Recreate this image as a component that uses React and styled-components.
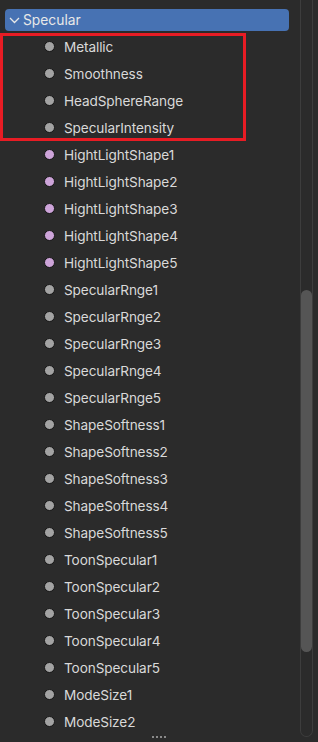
import React from 'react';
import styled, { createGlobalStyle } from 'styled-components';

const GlobalStyle = createGlobalStyle`
	html, body {
		margin: 0;
		padding: 0;
		background: #2b2b2b;
	}
	body {
		font-family: Inter, "Noto Sans", "DejaVu Sans", sans-serif;
	}
`;

const Page = styled.div`
	position: relative;
	width: 318px;
	height: 742px;
	overflow: hidden;
	background: #2b2b2b;
	padding-top: 9px;
	box-sizing: border-box;
`;

const Header = styled.div`
	margin-left: 5px;
	width: 284px;
	height: 22px;
	border-radius: 4px;
	background: #4772b3;
	display: flex;
	align-items: center;
	gap: 2px;
	padding-left: 3px;
	box-sizing: border-box;
	color: #e8e8e8;
	font-size: 13.8px;
`;

const Group = styled.div`
	margin-top: 2px;
	width: 246px;
	outline: 3px solid #e81c24;
	outline-offset: -3px;
`;

const Row = styled.div`
	height: 27px;
	display: flex;
	align-items: center;
	padding-left: 44px;
	gap: 9px;
	color: #d9d9d9;
	font-size: 13.6px;
	letter-spacing: -0.1px;
	white-space: nowrap;
`;

const Dot = styled.span`
	width: 9px;
	height: 9px;
	border-radius: 50%;
	background: ${(p) => (p.$pink ? '#cda4d9' : '#a3a3a3')};
	border: 1px solid #161616;
	flex-shrink: 0;
`;

const Track = styled.div`
	position: absolute;
	top: 0;
	left: 300px;
	width: 13px;
	height: 737px;
	border: 1px solid #3d3d3d;
	border-top: none;
	border-radius: 0 0 7px 7px;
	box-sizing: border-box;
`;

const Thumb = styled.div`
	position: absolute;
	top: 290px;
	left: 0;
	width: 11px;
	height: 362px;
	border-radius: 6px;
	background: #555555;
`;

const More = styled.div`
	position: absolute;
	left: 152px;
	top: 736px;
	display: flex;
	gap: 2px;
`;

const Tick = styled.span`
	width: 2px;
	height: 2px;
	background: #8a8a8a;
`;

const boxed = ['Metallic', 'Smoothness', 'HeadSphereRange', 'SpecularIntensity'];

const rest = [
	...[1, 2, 3, 4, 5].map((n) => ({ name: `HightLightShape${n}`, pink: true })),
	...[1, 2, 3, 4, 5].map((n) => ({ name: `SpecularRnge${n}` })),
	...[1, 2, 3, 4, 5].map((n) => ({ name: `ShapeSoftness${n}` })),
	...[1, 2, 3, 4, 5].map((n) => ({ name: `ToonSpecular${n}` })),
	{ name: 'ModeSize1' },
	{ name: 'ModeSize2' },
];

function Chevron() {
	return (
		<svg width="13" height="12" viewBox="0 0 13 12">
			<path d="M2 4 L6.5 8.5 L11 4" fill="none" stroke="#e8e8e8" strokeWidth="1.3" />
		</svg>
	);
}

export default function App() {
	return (
		<>
			<GlobalStyle />
			<Page>
				<Header>
					<Chevron />
					<span>Specular</span>
				</Header>
				<Group>
					{boxed.map((name) => (
						<Row key={name}>
							<Dot />
							{name}
						</Row>
					))}
				</Group>
				{rest.map((item) => (
					<Row key={item.name}>
						<Dot $pink={item.pink} />
						{item.name}
					</Row>
				))}
				<Track>
					<Thumb />
				</Track>
				<More>
					<Tick />
					<Tick />
					<Tick />
					<Tick />
				</More>
			</Page>
		</>
	);
}
